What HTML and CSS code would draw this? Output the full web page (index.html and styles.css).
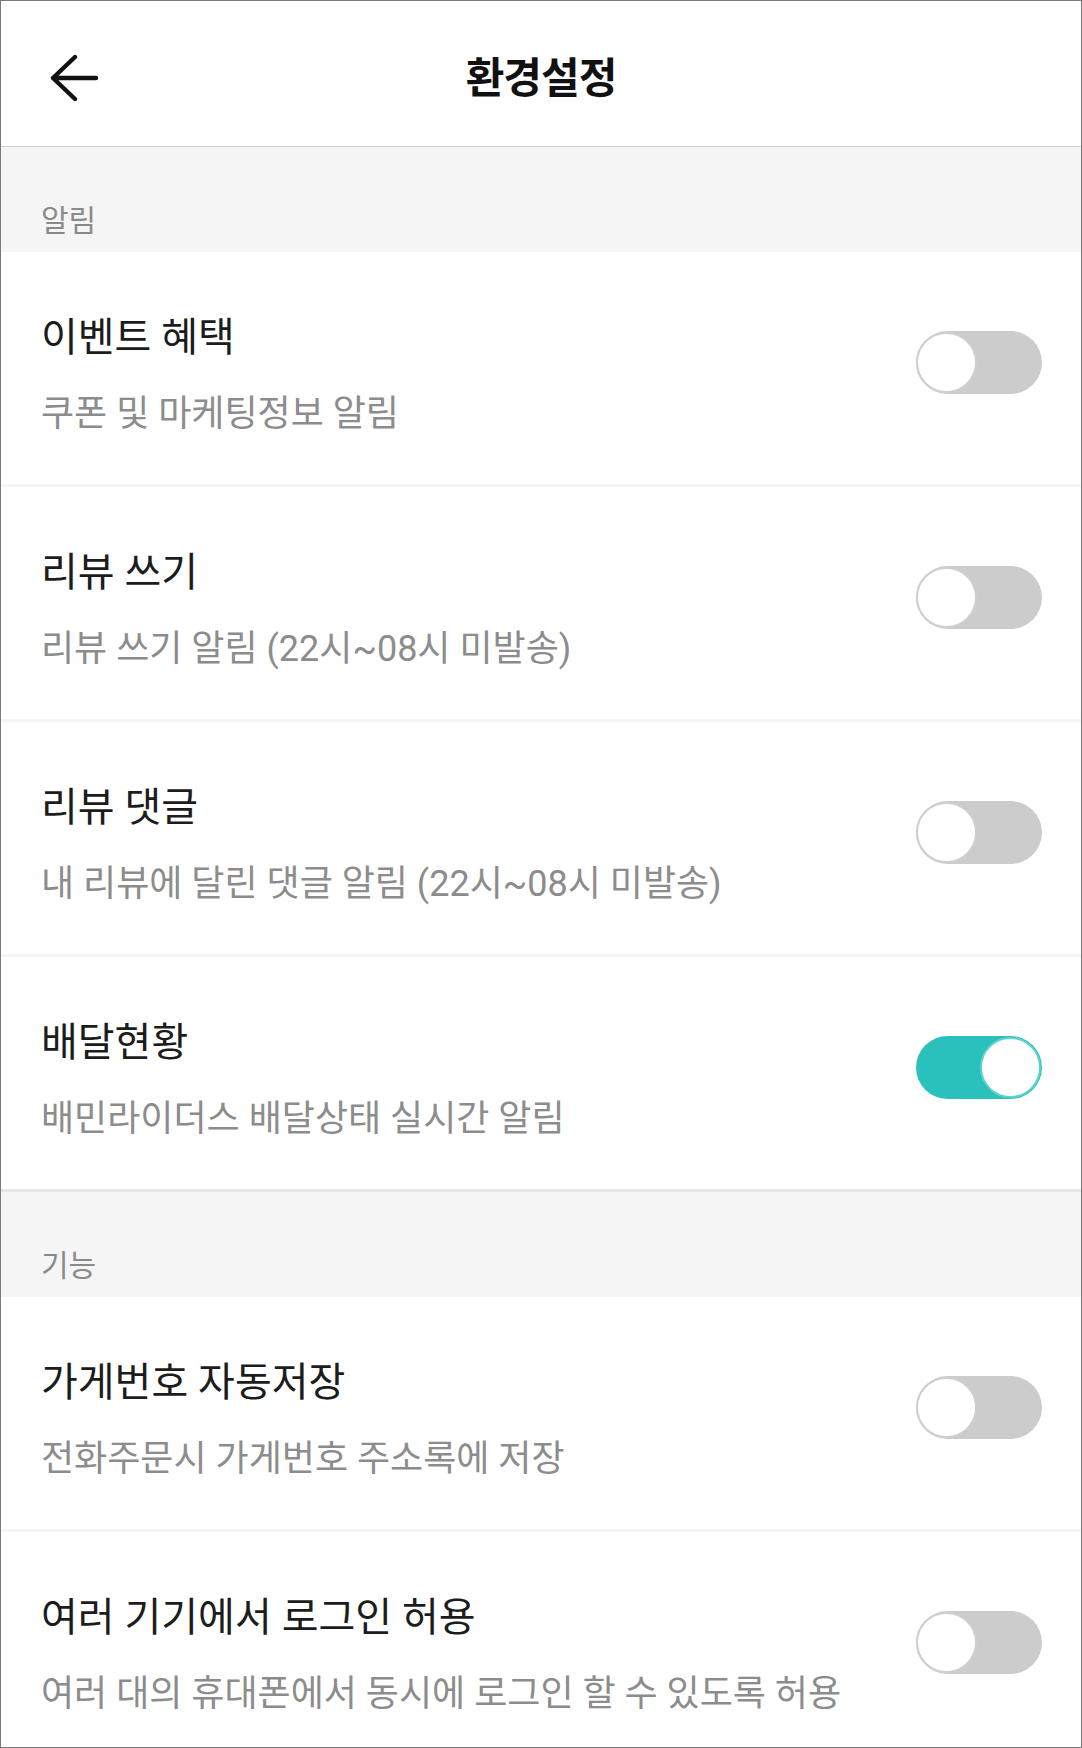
FILE: index.html
```html
<!DOCTYPE html>
<html lang="ko">
<head>
    <meta charset="UTF-8">
    <meta name="viewport" content="width=device-width, initial-scale=1.0">
    <title>환경설정</title>
    <link rel="stylesheet" href="styles.css">
</head>
<body>
    <div class="screen">
        <header class="topbar">
            <button class="back" type="button" aria-label="뒤로">
                <svg width="50" height="50" viewBox="0 0 50 50">
                    <path d="M25 4 L3 25 L25 46 M3 25 L46 25" fill="none" stroke="#111" stroke-width="4.4" stroke-linecap="round" stroke-linejoin="round"/>
                </svg>
            </button>
            <h1>환경설정</h1>
            <span></span>
        </header>

        <section class="group">
            <div class="group-title">알림</div>
            <div class="row">
                <div class="row-text">
                    <div class="row-title">이벤트 혜택</div>
                    <div class="row-desc">쿠폰 및 마케팅정보 알림</div>
                </div>
                <span class="toggle"></span>
            </div>
            <div class="row">
                <div class="row-text">
                    <div class="row-title">리뷰 쓰기</div>
                    <div class="row-desc">리뷰 쓰기 알림 (22시~08시 미발송)</div>
                </div>
                <span class="toggle"></span>
            </div>
            <div class="row">
                <div class="row-text">
                    <div class="row-title">리뷰 댓글</div>
                    <div class="row-desc">내 리뷰에 달린 댓글 알림 (22시~08시 미발송)</div>
                </div>
                <span class="toggle"></span>
            </div>
            <div class="row last">
                <div class="row-text">
                    <div class="row-title">배달현황</div>
                    <div class="row-desc">배민라이더스 배달상태 실시간 알림</div>
                </div>
                <span class="toggle on"></span>
            </div>
        </section>

        <section class="group">
            <div class="group-title">기능</div>
            <div class="row">
                <div class="row-text">
                    <div class="row-title">가게번호 자동저장</div>
                    <div class="row-desc">전화주문시 가게번호 주소록에 저장</div>
                </div>
                <span class="toggle"></span>
            </div>
            <div class="row">
                <div class="row-text">
                    <div class="row-title">여러 기기에서 로그인 허용</div>
                    <div class="row-desc">여러 대의 휴대폰에서 동시에 로그인 할 수 있도록 허용</div>
                </div>
                <span class="toggle"></span>
            </div>
        </section>
    </div>
</body>
</html>
```

FILE: styles.css
```css
body {
    margin: 0;
    font-family: Roboto, "Noto Sans CJK KR", "Noto Sans", sans-serif;
    background: #fff;
}
.screen {
    height: 1748px;
    box-sizing: border-box;
    border: 1px solid #7a7a7a;
    overflow: hidden;
    background: #fff;
}
.topbar {
    display: grid;
    grid-template-columns: 1fr auto 1fr;
    align-items: center;
    height: 145px;
    border-bottom: 1px solid #cfcfcf;
}
.back {
    justify-self: start;
    margin: 8px 0 0 49px;
    padding: 0;
    border: none;
    background: none;
    display: flex;
}
.topbar h1 {
    margin: 2px 0 0;
    font-size: 42px;
    font-weight: 700;
    color: #111;
    letter-spacing: -1px;
}
.group {
    background: #f5f5f5;
}
.group + .group {
    border-top: 3px solid #e6e6e6;
}
.group-title {
    height: 105px;
    box-sizing: border-box;
    padding: 56px 40px 0;
    font-size: 30px;
    line-height: 36px;
    color: #8a8a8a;
}
.row {
    display: flex;
    align-items: center;
    justify-content: space-between;
    height: 235px;
    box-sizing: border-box;
    padding: 0 39px 0 40px;
    background: #fff;
    border-bottom: 3px solid #f5f5f5;
}
.row.last {
    border-bottom: none;
    height: 232px;
}
.row-text {
    padding-top: 14px;
}
.row-title {
    font-size: 40px;
    line-height: 44px;
    color: #1c1c1c;
}
.row-desc {
    margin-top: 34px;
    font-size: 36px;
    line-height: 40px;
    color: #8c8c8c;
}
.toggle {
    position: relative;
    width: 126px;
    height: 63px;
    border-radius: 32px;
    background: #cccccc;
    margin-top: -12px;
    flex-shrink: 0;
}
.toggle::after {
    content: "";
    position: absolute;
    top: 1px;
    left: 0;
    width: 57px;
    height: 57px;
    border-radius: 50%;
    background: #fff;
    border: 2px solid #cfcfcf;
}
.toggle.on {
    background: #2ac1bc;
}
.toggle.on::after {
    left: auto;
    right: 1px;
    border-color: #5fd2ce;
}
```
